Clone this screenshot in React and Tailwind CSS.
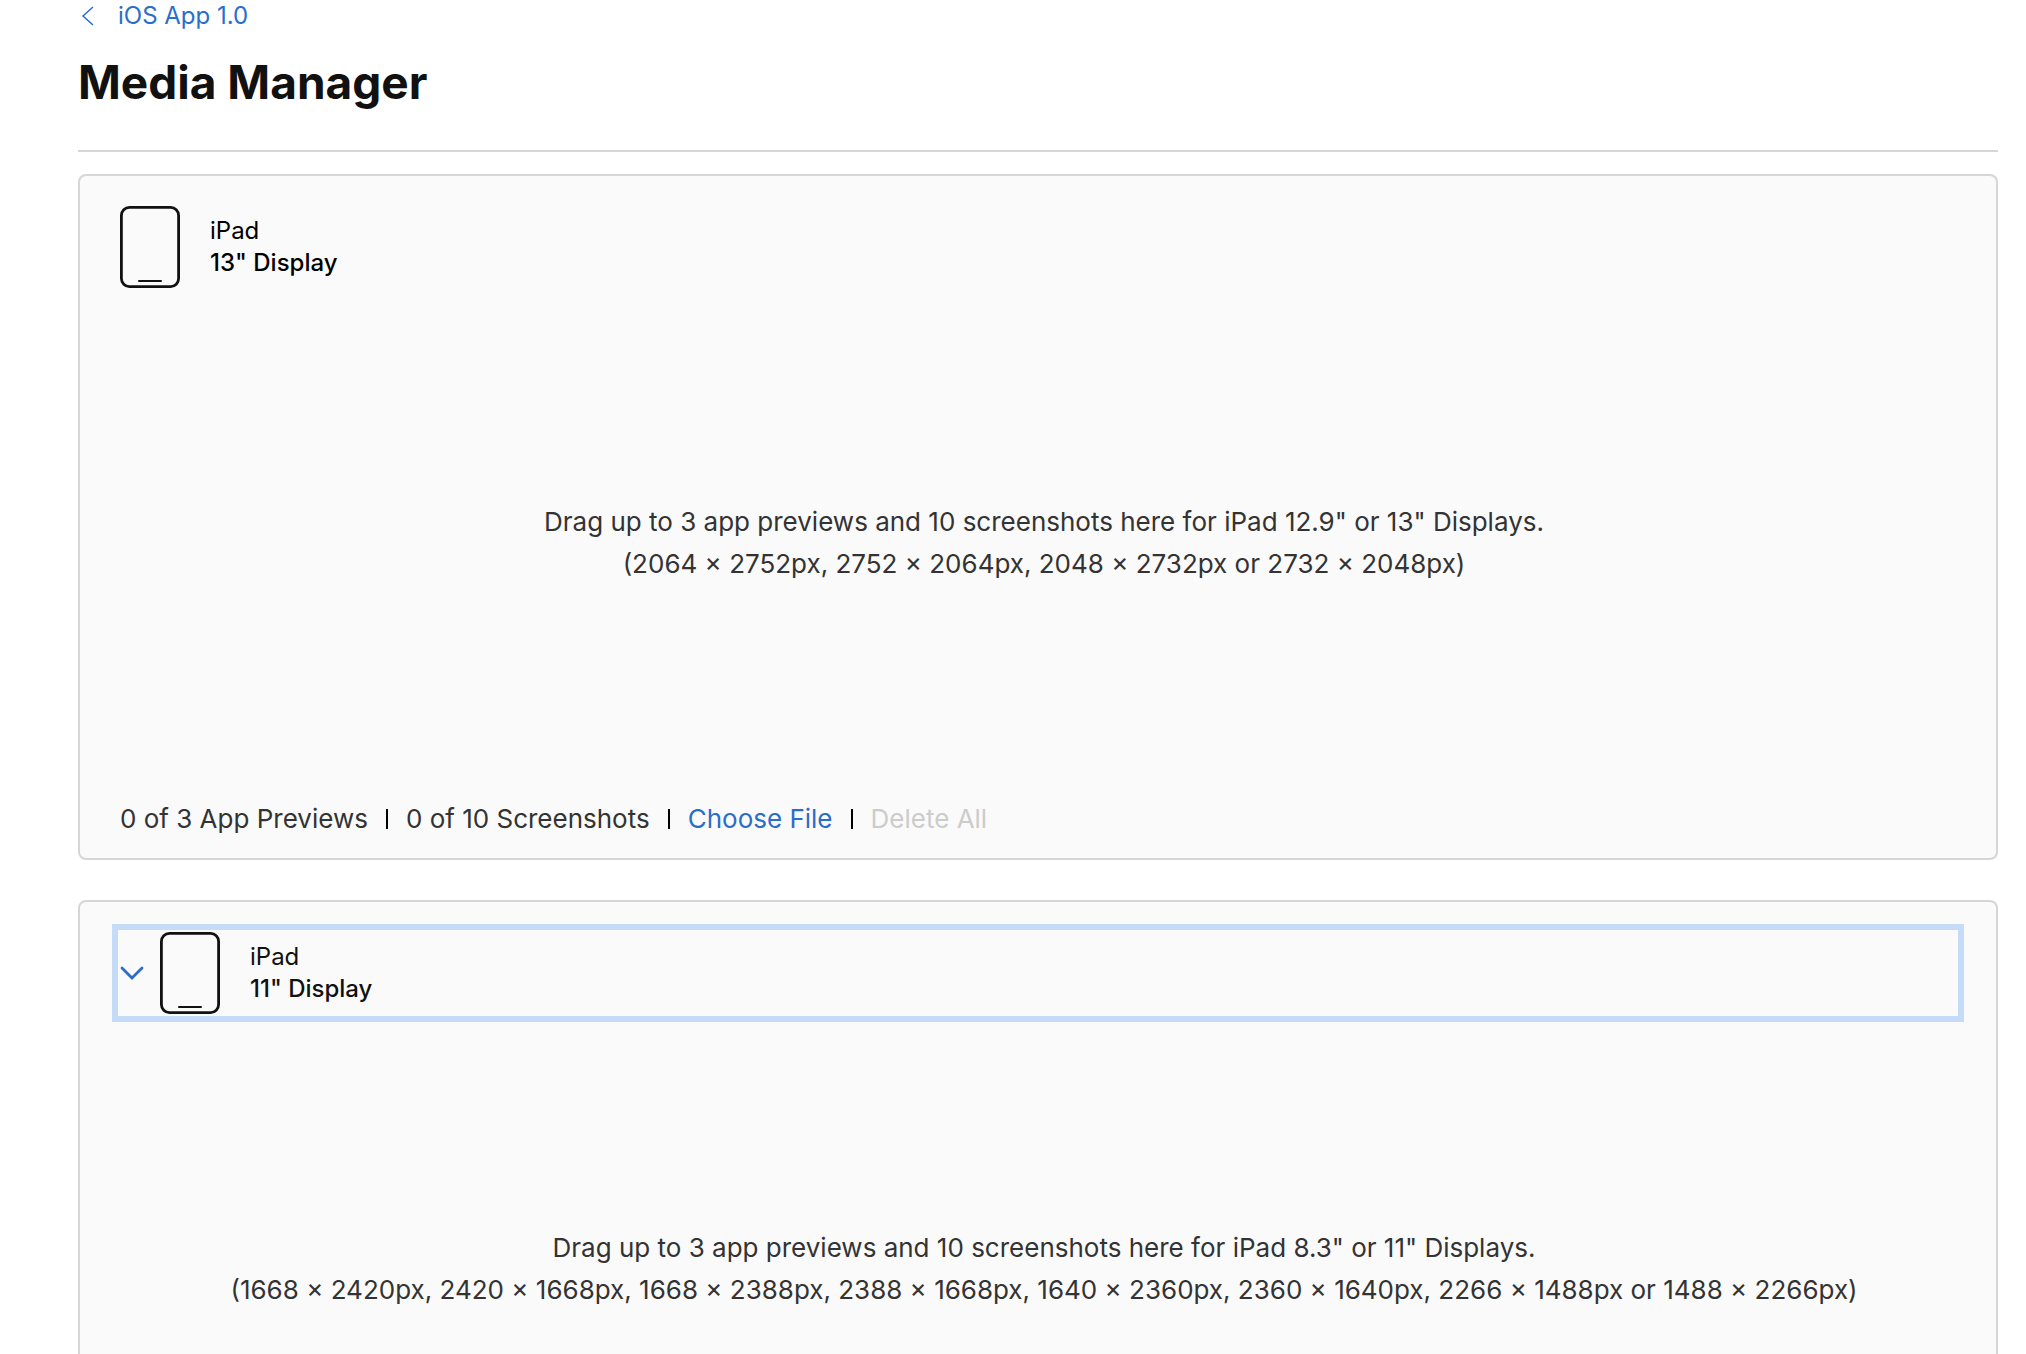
const displays = [
    {
        name: 'iPad',
        size: '13" Display',
        hint: 'Drag up to 3 app previews and 10 screenshots here for iPad 12.9" or 13" Displays.',
        dimensions: '(2064 × 2752px, 2752 × 2064px, 2048 × 2732px or 2732 × 2048px)',
        counts: ['0 of 3 App Previews', '0 of 10 Screenshots'],
    },
    {
        name: 'iPad',
        size: '11" Display',
        hint: 'Drag up to 3 app previews and 10 screenshots here for iPad 8.3" or 11" Displays.',
        dimensions:
            '(1668 × 2420px, 2420 × 1668px, 1668 × 2388px, 2388 × 1668px, 1640 × 2360px, 2360 × 1640px, 2266 × 1488px or 1488 × 2266px)',
        collapsible: true,
    },
];

function TabletIcon() {
    return (
        <svg width="60" height="82" viewBox="0 0 60 82" fill="none" className="shrink-0" aria-hidden="true">
            <rect x="1.4" y="1.4" width="57.2" height="79.2" rx="8" stroke="#111" strokeWidth="2.8" />
            <path d="M19 75h22" stroke="#111" strokeWidth="2" strokeLinecap="round" />
        </svg>
    );
}

function DisplayLabel({ name, size }) {
    return (
        <span className="flex items-center gap-[30px]">
            <TabletIcon />
            <span className="flex flex-col text-left text-[24px] leading-8">
                <span>{name}</span>
                <span className="font-medium">{size}</span>
            </span>
        </span>
    );
}

function Divider() {
    return <span className="h-5 w-0.5 bg-black" />;
}

function DisplayCard({ display }) {
    const { name, size, hint, dimensions, counts, collapsible } = display;

    return (
        <section className="rounded-lg border-2 border-[#d6d6d6] bg-[#fafafa] px-10 pt-[30px] pb-[18px]">
            {collapsible ? (
                <button
                    type="button"
                    aria-expanded="true"
                    className="flex w-full items-center gap-4 text-[#111] outline-6 outline-offset-2 outline-[#c5dcf8]"
                >
                    <svg width="24" height="14" viewBox="0 0 24 14" fill="none" aria-hidden="true">
                        <path d="M2 2l10 10L22 2" stroke="#2a6dcb" strokeWidth="2.8" strokeLinecap="round" />
                    </svg>
                    <DisplayLabel name={name} size={size} />
                </button>
            ) : (
                <header className="flex text-black">
                    <DisplayLabel name={name} size={size} />
                </header>
            )}

            <div className="flex min-h-[510px] flex-col items-center justify-center pl-3 text-center text-[26px] leading-[42px] text-[#333]">
                <p>{hint}</p>
                <p>{dimensions}</p>
            </div>

            {counts && (
                <footer className="flex items-center gap-[18px] text-[26px] leading-[42px] text-[#333]">
                    {counts.map((count) => (
                        <span key={count} className="flex items-center gap-[18px]">
                            {count}
                            <Divider />
                        </span>
                    ))}
                    <button type="button" className="text-[#2a6dcb]">Choose File</button>
                    <Divider />
                    <button type="button" disabled className="text-[#ccc]">Delete All</button>
                </footer>
            )}
        </section>
    );
}

export default function App() {
    return (
        <main className="h-screen overflow-hidden bg-white pr-7 pl-[78px] font-[Inter,sans-serif]">
            <a href="#app" className="inline-flex h-8 items-center gap-6 text-[24px] leading-8 text-[#2a6dcb]">
                <svg width="16" height="20" viewBox="0 0 16 20" fill="none" aria-hidden="true">
                    <path d="M15 1L5 10l10 9" stroke="currentColor" strokeWidth="1.5" />
                </svg>
                iOS App 1.0
            </a>
            <h1 className="pt-5 pb-[38px] text-[46px] leading-[60px] font-bold text-[#111]">Media Manager</h1>
            <hr className="mb-[22px] border-t-2 border-[#d6d6d6]" />
            <div className="flex flex-col gap-10">
                {displays.map((display) => (
                    <DisplayCard key={display.size} display={display} />
                ))}
            </div>
        </main>
    );
}
